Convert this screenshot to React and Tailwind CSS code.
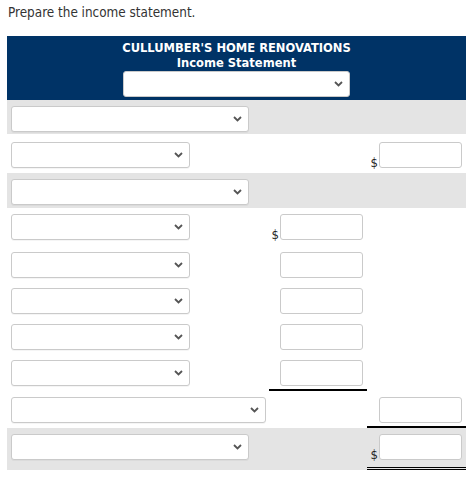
import React from 'react'

function Chevron() {
  return (
    <svg width="9" height="6" viewBox="0 0 9 6" className="shrink-0">
      <path d="M1 1l3.5 3.5L8 1" fill="none" stroke="#555" strokeWidth="1.8" />
    </svg>
  )
}

function Select({ width }) {
  return (
    <div
      className="h-[26px] bg-white border border-[#cacaca] rounded-[3px] flex items-center justify-end pr-[6px] shadow-[0_1px_0_rgba(0,0,0,0.04)]"
      style={{ width }}
    >
      <Chevron />
    </div>
  )
}

function Amount({ dollar }) {
  return (
    <div className="flex items-end">
      {dollar && <span className="text-[13px] leading-[14px] text-[#222] mr-[1px] mb-[-2px]">$</span>}
      <div className="w-[83px] h-[26px] bg-white border border-[#cacaca] rounded-[3px]" />
    </div>
  )
}

export default function App() {
  const rows = [
    { gray: true, sel: 238, h: 34, pt: 6 },
    { sel: 179, h: 39, pt: 8, right: 'dollar' },
    { gray: true, sel: 238, h: 35, pt: 6 },
    { sel: 179, h: 38, pt: 6, mid: 'dollar' },
    { sel: 179, h: 36, pt: 6, mid: 'input' },
    { sel: 179, h: 36, pt: 6, mid: 'input' },
    { sel: 179, h: 36, pt: 6, mid: 'input' },
    { sel: 179, h: 37, pt: 6, mid: 'input', midLine: true },
    { sel: 255, h: 37, pt: 6, right: 'input', rightLine: true },
    { gray: true, sel: 238, h: 42, pt: 6, right: 'dollar', double: true },
  ]

  return (
    <div className="w-[473px] h-[480px] bg-white font-['DejaVu_Sans_Condensed','DejaVu_Sans',sans-serif] text-[#333]">
      <p className="pl-[8px] pt-[5px] text-[13.4px] leading-[16px]">Prepare the income statement.</p>

      <div className="ml-[7px] mt-[15px] w-[459px]">
        {/* Header */}
        <div className="bg-[#003366] h-[64px] flex flex-col items-center pt-[4px] text-white font-bold text-[12.8px] leading-[15px]">
          <div>CULLUMBER'S HOME RENOVATIONS</div>
          <div>Income Statement</div>
          <div className="mt-[1px]">
            <Select width={227} />
          </div>
        </div>

        {rows.map((r, i) => (
          <div
            key={i}
            className={`grid grid-cols-[262px_98px_99px] ${r.gray ? 'bg-[#e4e4e4]' : 'bg-white'}`}
            style={{ height: r.h }}
          >
            <div className="pl-[4px]" style={{ paddingTop: r.pt }}>
              <Select width={r.sel} />
            </div>
            <div
              className={`flex justify-end pr-[4px] ${r.midLine ? 'border-b-2 border-black' : ''}`}
              style={{ paddingTop: r.pt }}
            >
              {r.mid && (
                <div className="self-start">
                  <Amount dollar={r.mid === 'dollar'} />
                </div>
              )}
            </div>
            <div
              className={`flex justify-end pr-[4px] ${r.rightLine ? 'border-b-2 border-black' : ''} ${r.double ? 'border-b-[3px] border-double border-black' : ''}`}
              style={{ paddingTop: r.pt }}
            >
              {r.right && (
                <div className="self-start">
                  <Amount dollar={r.right === 'dollar'} />
                </div>
              )}
            </div>
          </div>
        ))}
      </div>
    </div>
  )
}
